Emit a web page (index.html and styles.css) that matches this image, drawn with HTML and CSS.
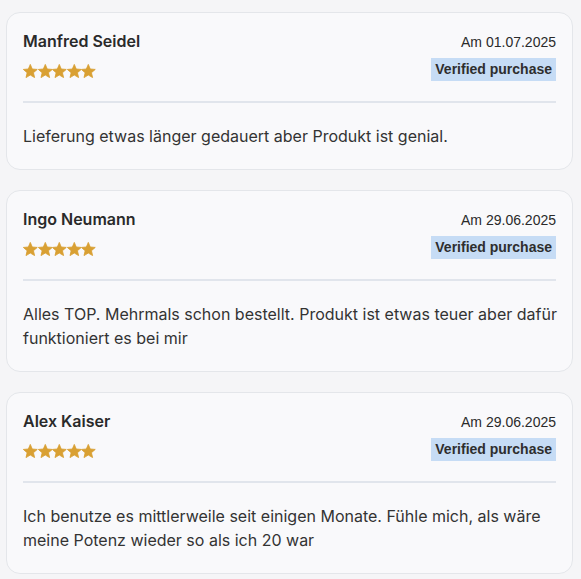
FILE: index.html
```html
<!DOCTYPE html>
<html>
<head>
  <meta charset="UTF-8">
  <title>Bewertungen</title>
  <link rel="stylesheet" href="styles.css">
</head>
<body>
  <div class="reviews">

    <div class="review">
      <div class="review-head">
        <div class="review-who">
          <div class="name">Manfred Seidel</div>
          <div class="stars">
            <svg viewBox="1.5 1.5 21 20"><path d="M12 17.27L18.18 21l-1.64-7.03L22 9.24l-7.19-.61L12 2 9.19 8.63 2 9.24l5.46 4.73L5.82 21z"/></svg>
            <svg viewBox="1.5 1.5 21 20"><path d="M12 17.27L18.18 21l-1.64-7.03L22 9.24l-7.19-.61L12 2 9.19 8.63 2 9.24l5.46 4.73L5.82 21z"/></svg>
            <svg viewBox="1.5 1.5 21 20"><path d="M12 17.27L18.18 21l-1.64-7.03L22 9.24l-7.19-.61L12 2 9.19 8.63 2 9.24l5.46 4.73L5.82 21z"/></svg>
            <svg viewBox="1.5 1.5 21 20"><path d="M12 17.27L18.18 21l-1.64-7.03L22 9.24l-7.19-.61L12 2 9.19 8.63 2 9.24l5.46 4.73L5.82 21z"/></svg>
            <svg viewBox="1.5 1.5 21 20"><path d="M12 17.27L18.18 21l-1.64-7.03L22 9.24l-7.19-.61L12 2 9.19 8.63 2 9.24l5.46 4.73L5.82 21z"/></svg>
          </div>
        </div>
        <div class="review-meta">
          <div class="date">Am 01.07.2025</div>
          <span class="verified">Verified purchase</span>
        </div>
      </div>
      <p class="review-text">Lieferung etwas länger gedauert aber Produkt ist genial.</p>
    </div>

    <div class="review">
      <div class="review-head">
        <div class="review-who">
          <div class="name">Ingo Neumann</div>
          <div class="stars">
            <svg viewBox="1.5 1.5 21 20"><path d="M12 17.27L18.18 21l-1.64-7.03L22 9.24l-7.19-.61L12 2 9.19 8.63 2 9.24l5.46 4.73L5.82 21z"/></svg>
            <svg viewBox="1.5 1.5 21 20"><path d="M12 17.27L18.18 21l-1.64-7.03L22 9.24l-7.19-.61L12 2 9.19 8.63 2 9.24l5.46 4.73L5.82 21z"/></svg>
            <svg viewBox="1.5 1.5 21 20"><path d="M12 17.27L18.18 21l-1.64-7.03L22 9.24l-7.19-.61L12 2 9.19 8.63 2 9.24l5.46 4.73L5.82 21z"/></svg>
            <svg viewBox="1.5 1.5 21 20"><path d="M12 17.27L18.18 21l-1.64-7.03L22 9.24l-7.19-.61L12 2 9.19 8.63 2 9.24l5.46 4.73L5.82 21z"/></svg>
            <svg viewBox="1.5 1.5 21 20"><path d="M12 17.27L18.18 21l-1.64-7.03L22 9.24l-7.19-.61L12 2 9.19 8.63 2 9.24l5.46 4.73L5.82 21z"/></svg>
          </div>
        </div>
        <div class="review-meta">
          <div class="date">Am 29.06.2025</div>
          <span class="verified">Verified purchase</span>
        </div>
      </div>
      <p class="review-text">Alles TOP. Mehrmals schon bestellt. Produkt ist etwas teuer aber dafür funktioniert es bei mir</p>
    </div>

    <div class="review">
      <div class="review-head">
        <div class="review-who">
          <div class="name">Alex Kaiser</div>
          <div class="stars">
            <svg viewBox="1.5 1.5 21 20"><path d="M12 17.27L18.18 21l-1.64-7.03L22 9.24l-7.19-.61L12 2 9.19 8.63 2 9.24l5.46 4.73L5.82 21z"/></svg>
            <svg viewBox="1.5 1.5 21 20"><path d="M12 17.27L18.18 21l-1.64-7.03L22 9.24l-7.19-.61L12 2 9.19 8.63 2 9.24l5.46 4.73L5.82 21z"/></svg>
            <svg viewBox="1.5 1.5 21 20"><path d="M12 17.27L18.18 21l-1.64-7.03L22 9.24l-7.19-.61L12 2 9.19 8.63 2 9.24l5.46 4.73L5.82 21z"/></svg>
            <svg viewBox="1.5 1.5 21 20"><path d="M12 17.27L18.18 21l-1.64-7.03L22 9.24l-7.19-.61L12 2 9.19 8.63 2 9.24l5.46 4.73L5.82 21z"/></svg>
            <svg viewBox="1.5 1.5 21 20"><path d="M12 17.27L18.18 21l-1.64-7.03L22 9.24l-7.19-.61L12 2 9.19 8.63 2 9.24l5.46 4.73L5.82 21z"/></svg>
          </div>
        </div>
        <div class="review-meta">
          <div class="date">Am 29.06.2025</div>
          <span class="verified">Verified purchase</span>
        </div>
      </div>
      <p class="review-text">Ich benutze es mittlerweile seit einigen Monate. Fühle mich, als wäre meine Potenz wieder so als ich 20 war</p>
    </div>

  </div>
</body>
</html>
```

FILE: styles.css
```css
body {
  margin: 0;
  background-color: #f5f5f7;
  color: #333333;
  font-family: Inter, "Noto Sans", sans-serif;
}

.reviews {
  display: flex;
  flex-direction: column;
  gap: 20px;
  padding: 12px 8px 0 6px;
}

.review {
  background-color: #f9f9fb;
  border: 1px solid #e4e6ea;
  border-radius: 14px;
  padding: 16px 16px 21px 16px;
}

.review-head {
  display: flex;
  justify-content: space-between;
  align-items: flex-start;
  padding-bottom: 20px;
  border-bottom: 2px solid #e1e5ec;
}

.name {
  font-size: 16px;
  font-weight: 600;
  line-height: 24px;
  color: #2a2a2a;
}

.stars {
  display: flex;
  margin-top: 11px;
}

.stars svg {
  width: 14.6px;
  height: 14px;
  fill: #d9a033;
  stroke: #d9a033;
  stroke-width: 1.2;
  stroke-linejoin: round;
}

.review-meta {
  display: flex;
  flex-direction: column;
  align-items: flex-end;
}

.date {
  font-family: "Liberation Sans", Arial, sans-serif;
  font-size: 14px;
  line-height: 26px;
  color: #2a2a2a;
}

.verified {
  margin-top: 3px;
  padding: 3px 4px;
  background-color: #c6dcf5;
  font-family: "Liberation Sans", Arial, sans-serif;
  font-size: 14px;
  font-weight: bold;
  line-height: 17px;
  color: #2e2e2e;
}

.review-text {
  margin: 21px -6px 0 0;
  font-size: 16px;
  line-height: 24px;
  color: #333333;
}
```
